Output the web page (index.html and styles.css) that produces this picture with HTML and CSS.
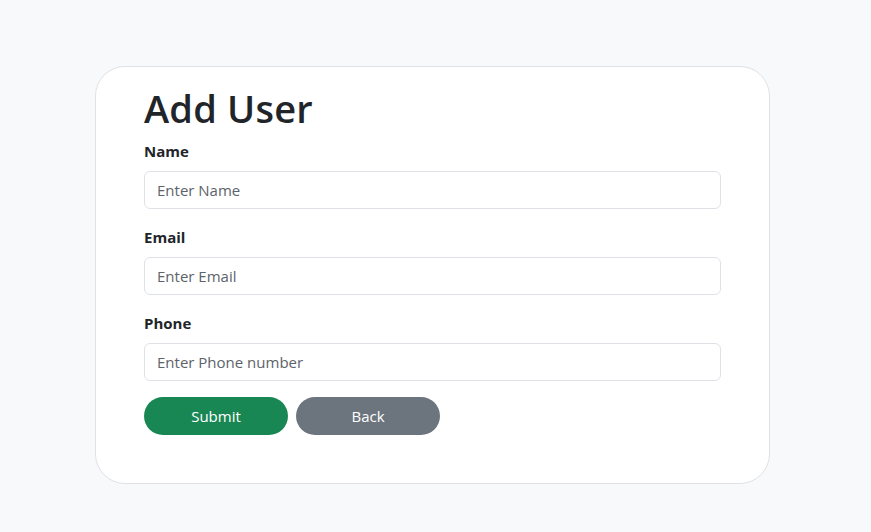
FILE: index.html
```html
<!DOCTYPE html>
<html>
<head>
<meta charset="utf-8">
<link rel="stylesheet" href="styles.css">
</head>
<body>
<div class="page">
  <div class="card">
    <h1 class="title">Add User</h1>
    <form class="form">
      <div class="group">
        <label class="label">Name</label>
        <input class="input" type="text" placeholder="Enter Name">
      </div>
      <div class="group">
        <label class="label">Email</label>
        <input class="input" type="text" placeholder="Enter Email">
      </div>
      <div class="group">
        <label class="label">Phone</label>
        <input class="input" type="text" placeholder="Enter Phone number">
      </div>
      <div class="actions">
        <button type="button" class="btn btn-success">Submit</button>
        <button type="button" class="btn btn-secondary">Back</button>
      </div>
    </form>
  </div>
</div>
</body>
</html>
```
FILE: styles.css
```css
* { box-sizing: border-box; }
body {
  margin: 0;
  background: #f8f9fa;
  font-family: "Open Sans", "Noto Sans", sans-serif;
  color: #212529;
}
.page {
  padding: 66px 0 0 95px;
}
.card {
  width: 675px;
  height: 418px;
  background: #fff;
  border: 1px solid #dee2e6;
  border-radius: 30px;
  padding: 18px 48px 48px 48px;
}
.title {
  margin: 0 0 8px 0;
  font-size: 38px;
  font-weight: 600;
  line-height: 46px;
  letter-spacing: 0.2px;
}
.group {
  display: flex;
  flex-direction: column;
  margin-bottom: 16px;
}
.label {
  font-size: 15px;
  font-weight: 700;
  line-height: 24px;
  margin-bottom: 8px;
}
.input {
  width: 577px;
  height: 38px;
  border: 1px solid #dee2e6;
  border-radius: 6px;
  padding: 0 12px;
  font-family: inherit;
  font-size: 15px;
  color: #212529;
  background: #fff;
}
.input::placeholder { color: #5c636a; }
.actions {
  display: flex;
  gap: 8px;
}
.btn {
  width: 144px;
  height: 38px;
  border: none;
  border-radius: 19px;
  color: #fff;
  font-family: inherit;
  font-size: 15px;
}
.btn-success { background: #198754; }
.btn-secondary { background: #6c757d; }
```
